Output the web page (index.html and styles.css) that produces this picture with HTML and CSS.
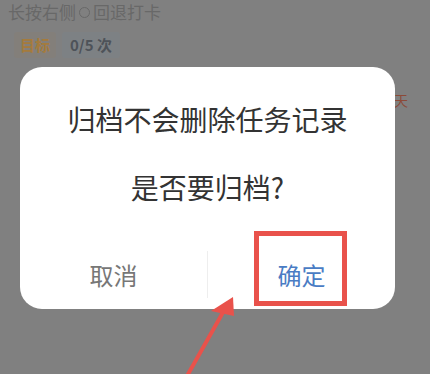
FILE: index.html
```html
<!DOCTYPE html>
<html lang="zh-CN">

<head>
    <meta charset="UTF-8">
    <meta name="viewport" content="width=device-width, initial-scale=1.0">
    <title>归档</title>
    <link rel="stylesheet" href="styles.css">
</head>

<body>
    <div class="page">
        <div class="hint">长按右侧<span class="circle"></span>回退打卡</div>
        <div class="tags">
            <span class="tag tag-goal">目标</span>
            <span class="tag tag-count">0/5 次</span>
        </div>
        <div class="day">天</div>
    </div>

    <div class="dialog">
        <p class="msg">归档不会删除任务记录</p>
        <p class="msg msg-ask">是否要归档?</p>
        <div class="actions">
            <button class="btn btn-cancel">取消</button>
            <span class="divider"></span>
            <button class="btn btn-ok">确定</button>
        </div>
    </div>

    <div class="mark"></div>
    <svg class="arrow" width="430" height="374" viewBox="0 0 430 374">
        <line x1="187" y1="376" x2="226" y2="307" stroke="#e9524b" stroke-width="4" stroke-linecap="round" />
        <polygon points="233,297 211,311 234,316" fill="#e9524b" />
    </svg>
</body>

</html>
```

FILE: styles.css
```css
body {
    margin: 0;
    background: #808080;
    font-family: "Noto Sans CJK SC", "Noto Sans", sans-serif;
    width: 430px;
    height: 374px;
    overflow: hidden;
    position: relative;
}

.page {
    padding: 0 8px;
}

.hint {
    font-size: 17px;
    line-height: 24px;
    color: #686868;
}

.circle {
    display: inline-block;
    width: 9px;
    height: 9px;
    border: 1.5px solid #686868;
    border-radius: 50%;
    margin: 0 3px;
    vertical-align: 1px;
}

.tags {
    display: flex;
    gap: 6px;
    margin-top: 8px;
    padding-left: 6px;
}

.tag {
    font-size: 15px;
    font-weight: bold;
    line-height: 26px;
    padding: 0 6px;
    border-radius: 3px;
}

.tag-goal {
    background: #837f7a;
    color: #a57b3c;
}

.tag-count {
    background: #7d8184;
    color: #4e5359;
    padding: 0 8px;
}

.day {
    text-align: right;
    font-size: 14px;
    color: #8c4a38;
    margin-top: 32px;
    margin-right: 14px;
}

.dialog {
    position: absolute;
    left: 20px;
    top: 67px;
    width: 375px;
    height: 242px;
    background: #fff;
    border-radius: 22px;
    padding-top: 34px;
    box-sizing: border-box;
    text-align: center;
}

.msg {
    margin: 0;
    font-size: 28px;
    line-height: 36px;
    color: #333;
}

.msg-ask {
    margin-top: 32px;
}

.actions {
    display: flex;
    align-items: center;
    height: 47px;
    margin-top: 46px;
}

.btn {
    flex: 1;
    border: none;
    background: none;
    font-family: inherit;
    font-size: 24px;
    padding: 0;
}

.btn-cancel {
    color: #777;
}

.btn-ok {
    color: #4a7cc4;
}

.divider {
    width: 1px;
    height: 47px;
    background: #eee;
}

.mark {
    position: absolute;
    left: 254px;
    top: 231px;
    width: 93px;
    height: 75px;
    border: 5px solid #e9524b;
    box-sizing: border-box;
}

.arrow {
    position: absolute;
    left: 0;
    top: 0;
}
```
